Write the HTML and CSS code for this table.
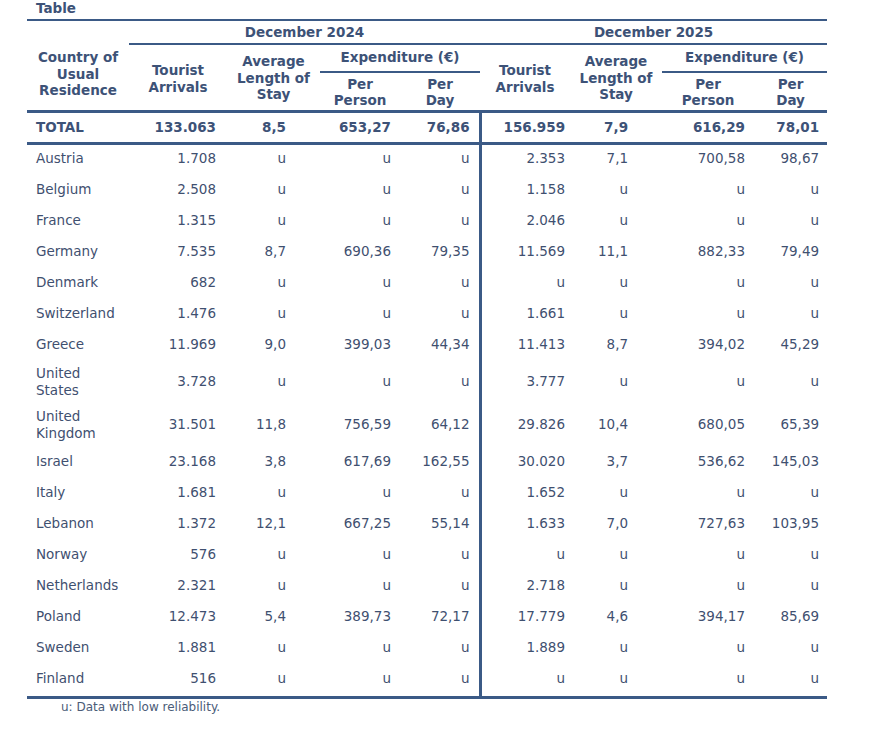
FILE: index.html
```html
<!DOCTYPE html>
<html>
<head>
<meta charset="utf-8">
<link rel="stylesheet" href="styles.css">
</head>
<body>
<div class="wrap">
  <div class="title">Table</div>
  <table class="data">
    <colgroup>
      <col class="c1"><col class="c2"><col class="c3"><col class="c4"><col class="c5">
      <col class="c6"><col class="c7"><col class="c8"><col class="c9">
    </colgroup>
    <thead>
      <tr class="h1">
        <th rowspan="3" class="country">Country of<br>Usual<br>Residence</th>
        <th colspan="4" class="period">December 2024</th>
        <th colspan="4" class="period">December 2025</th>
      </tr>
      <tr class="h2">
        <th rowspan="2" class="tour">Tourist<br>Arrivals</th>
        <th rowspan="2" class="avg">Average<br>Length of<br>Stay</th>
        <th colspan="2" class="exp">Expenditure (€)</th>
        <th rowspan="2" class="tour">Tourist<br>Arrivals</th>
        <th rowspan="2" class="avg">Average<br>Length of<br>Stay</th>
        <th colspan="2" class="exp">Expenditure (€)</th>
      </tr>
      <tr class="h3">
        <th>Per<br>Person</th>
        <th>Per<br>Day</th>
        <th>Per<br>Person</th>
        <th>Per<br>Day</th>
      </tr>
    </thead>
    <tbody class="total">
      <tr>
        <td class="name">TOTAL</td><td class="ta">133.063</td><td class="al">8,5</td><td class="pp">653,27</td><td class="pd">76,86</td>
        <td class="ta2 div">156.959</td><td class="al2">7,9</td><td class="pp2">616,29</td><td class="pd2">78,01</td>
      </tr>
    </tbody>
    <tbody class="rows">
      <tr><td class="name">Austria</td><td class="ta">1.708</td><td class="al">u</td><td class="pp">u</td><td class="pd">u</td><td class="ta2 div">2.353</td><td class="al2">7,1</td><td class="pp2">700,58</td><td class="pd2">98,67</td></tr>
      <tr><td class="name">Belgium</td><td class="ta">2.508</td><td class="al">u</td><td class="pp">u</td><td class="pd">u</td><td class="ta2 div">1.158</td><td class="al2">u</td><td class="pp2">u</td><td class="pd2">u</td></tr>
      <tr><td class="name">France</td><td class="ta">1.315</td><td class="al">u</td><td class="pp">u</td><td class="pd">u</td><td class="ta2 div">2.046</td><td class="al2">u</td><td class="pp2">u</td><td class="pd2">u</td></tr>
      <tr><td class="name">Germany</td><td class="ta">7.535</td><td class="al">8,7</td><td class="pp">690,36</td><td class="pd">79,35</td><td class="ta2 div">11.569</td><td class="al2">11,1</td><td class="pp2">882,33</td><td class="pd2">79,49</td></tr>
      <tr><td class="name">Denmark</td><td class="ta">682</td><td class="al">u</td><td class="pp">u</td><td class="pd">u</td><td class="ta2 div">u</td><td class="al2">u</td><td class="pp2">u</td><td class="pd2">u</td></tr>
      <tr><td class="name">Switzerland</td><td class="ta">1.476</td><td class="al">u</td><td class="pp">u</td><td class="pd">u</td><td class="ta2 div">1.661</td><td class="al2">u</td><td class="pp2">u</td><td class="pd2">u</td></tr>
      <tr><td class="name">Greece</td><td class="ta">11.969</td><td class="al">9,0</td><td class="pp">399,03</td><td class="pd">44,34</td><td class="ta2 div">11.413</td><td class="al2">8,7</td><td class="pp2">394,02</td><td class="pd2">45,29</td></tr>
      <tr class="two"><td class="name">United<br>States</td><td class="ta">3.728</td><td class="al">u</td><td class="pp">u</td><td class="pd">u</td><td class="ta2 div">3.777</td><td class="al2">u</td><td class="pp2">u</td><td class="pd2">u</td></tr>
      <tr class="two"><td class="name">United<br>Kingdom</td><td class="ta">31.501</td><td class="al">11,8</td><td class="pp">756,59</td><td class="pd">64,12</td><td class="ta2 div">29.826</td><td class="al2">10,4</td><td class="pp2">680,05</td><td class="pd2">65,39</td></tr>
      <tr><td class="name">Israel</td><td class="ta">23.168</td><td class="al">3,8</td><td class="pp">617,69</td><td class="pd">162,55</td><td class="ta2 div">30.020</td><td class="al2">3,7</td><td class="pp2">536,62</td><td class="pd2">145,03</td></tr>
      <tr><td class="name">Italy</td><td class="ta">1.681</td><td class="al">u</td><td class="pp">u</td><td class="pd">u</td><td class="ta2 div">1.652</td><td class="al2">u</td><td class="pp2">u</td><td class="pd2">u</td></tr>
      <tr><td class="name">Lebanon</td><td class="ta">1.372</td><td class="al">12,1</td><td class="pp">667,25</td><td class="pd">55,14</td><td class="ta2 div">1.633</td><td class="al2">7,0</td><td class="pp2">727,63</td><td class="pd2">103,95</td></tr>
      <tr><td class="name">Norway</td><td class="ta">576</td><td class="al">u</td><td class="pp">u</td><td class="pd">u</td><td class="ta2 div">u</td><td class="al2">u</td><td class="pp2">u</td><td class="pd2">u</td></tr>
      <tr><td class="name">Netherlands</td><td class="ta">2.321</td><td class="al">u</td><td class="pp">u</td><td class="pd">u</td><td class="ta2 div">2.718</td><td class="al2">u</td><td class="pp2">u</td><td class="pd2">u</td></tr>
      <tr><td class="name">Poland</td><td class="ta">12.473</td><td class="al">5,4</td><td class="pp">389,73</td><td class="pd">72,17</td><td class="ta2 div">17.779</td><td class="al2">4,6</td><td class="pp2">394,17</td><td class="pd2">85,69</td></tr>
      <tr><td class="name">Sweden</td><td class="ta">1.881</td><td class="al">u</td><td class="pp">u</td><td class="pd">u</td><td class="ta2 div">1.889</td><td class="al2">u</td><td class="pp2">u</td><td class="pd2">u</td></tr>
      <tr><td class="name">Finland</td><td class="ta">516</td><td class="al">u</td><td class="pp">u</td><td class="pd">u</td><td class="ta2 div">u</td><td class="al2">u</td><td class="pp2">u</td><td class="pd2">u</td></tr>
    </tbody>
  </table>
  <div class="note">u: Data with low reliability.</div>
</div>
</body>
</html>
```

FILE: styles.css
```css
html, body {
  margin: 0;
  padding: 0;
  background: #ffffff;
}
body {
  font-family: "DejaVu Sans", Verdana, sans-serif;
  color: #3f5070;
  font-size: 13.5px;
}
.wrap {
  padding-left: 27px;
  width: 800px;
}
.title {
  font-weight: bold;
  color: #3d5277;
  font-size: 13.5px;
  line-height: 17px;
  padding-left: 9px;
  height: 19px;
}
.data {
  border-collapse: collapse;
  table-layout: fixed;
  width: 800px;
  border-top: 2px solid #3b5a86;
  border-bottom: 3px solid #3b5a86;
}
.c1 { width: 102px; }
.c2 { width: 98px; }
.c3 { width: 93px; }
.c4 { width: 80px; }
.c5 { width: 80px; }
.c6 { width: 90px; }
.c7 { width: 92px; }
.c8 { width: 92px; }
.c9 { width: 73px; }

th {
  font-weight: bold;
  color: #3d5277;
  text-align: center;
  padding: 0;
  line-height: 16.5px;
  vertical-align: middle;
}
.h1 th.period {
  height: 22px;
  border-bottom: 2px solid #3b5a86;
  line-height: 20px;
}
.h1 th.country {
  border-bottom: 3px solid #3b5a86;
  padding-top: 17px;
}
.h2 th.exp {
  height: 25px;
  border-bottom: 2px solid #3b5a86;
  vertical-align: middle;
  padding-bottom: 1px;
}
.h2 th {
  border-bottom: 3px solid #3b5a86;
}
.h2 th.tour {
  padding-top: 2px;
}
.h2 th.avg {
  padding-top: 1px;
}
.h3 th {
  height: 36px;
  border-bottom: 3px solid #3b5a86;
  padding-top: 1px;
}
td {
  padding: 0 0 4px 0;
  height: 27px;
  text-align: right;
  vertical-align: middle;
  line-height: 17px;
}
.total td {
  font-weight: bold;
  color: #3d5277;
  height: 28px;
  padding-bottom: 1px;
  border-bottom: 3px solid #3b5a86;
}
.rows tr.two td { height: 39px; }
td.name { text-align: left; padding-left: 9px; }
td.ta { padding-right: 11px; }
td.al { padding-right: 34px; }
td.pp { padding-right: 9px; }
td.pd { padding-right: 9px; }
td.div { border-left: 3px solid #3b5a86; }
td.ta2 { padding-right: 5px; }
td.al2 { padding-right: 34px; }
td.pp2 { padding-right: 9px; }
td.pd2 { padding-right: 8px; }
.note {
  font-size: 12px;
  color: #4b5c78;
  padding-left: 34px;
  padding-top: 1px;
  line-height: 15px;
}
```
